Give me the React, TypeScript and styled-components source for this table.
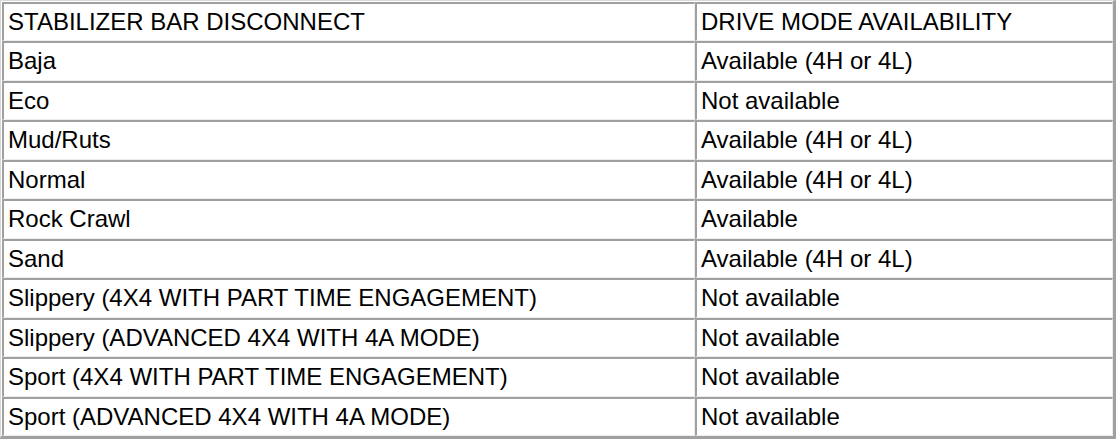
import React from 'react';
import styled, { createGlobalStyle } from 'styled-components';

const GlobalStyle = createGlobalStyle`
  body {
    margin: 0;
    background: #ffffff;
    font-family: "Liberation Sans", Arial, sans-serif;
  }
`;

const Table = styled.table`
  width: 1116px;
  border-collapse: separate;
  border-spacing: 0;
  border-top: 1.5px solid #d8d8d8;
  border-left: 1.5px solid #d8d8d8;
  border-right: 3px solid #a0a0a0;
  border-bottom: 3px solid #a0a0a0;
  padding: 0.5px 0 0 0.5px;
`;

const Cell = styled.td<{ $first?: boolean }>`
  height: 39.5px;
  box-sizing: border-box;
  width: ${(p) => (p.$first ? '693px' : 'auto')};
  padding: 0 4px 0 4.5px;
  border-top: 2.5px solid #a0a0a0;
  border-left: 2.5px solid #a0a0a0;
  border-right: 1px solid #ececec;
  border-bottom: 1px solid #ececec;
  font-size: 24px;
  color: #000000;
  vertical-align: middle;
  white-space: nowrap;
  line-height: 1;
`;

const rows: [string, string][] = [
  ['STABILIZER BAR DISCONNECT', 'DRIVE MODE AVAILABILITY'],
  ['Baja', 'Available (4H or 4L)'],
  ['Eco', 'Not available'],
  ['Mud/Ruts', 'Available (4H or 4L)'],
  ['Normal', 'Available (4H or 4L)'],
  ['Rock Crawl', 'Available'],
  ['Sand', 'Available (4H or 4L)'],
  ['Slippery (4X4 WITH PART TIME ENGAGEMENT)', 'Not available'],
  ['Slippery (ADVANCED 4X4 WITH 4A MODE)', 'Not available'],
  ['Sport (4X4 WITH PART TIME ENGAGEMENT)', 'Not available'],
  ['Sport (ADVANCED 4X4 WITH 4A MODE)', 'Not available'],
];

export default function App() {
  return (
    <>
      <GlobalStyle />
      <Table>
        <tbody>
          {rows.map(([mode, avail]) => (
            <tr key={mode}>
              <Cell $first>{mode}</Cell>
              <Cell>{avail}</Cell>
            </tr>
          ))}
        </tbody>
      </Table>
    </>
  );
}
